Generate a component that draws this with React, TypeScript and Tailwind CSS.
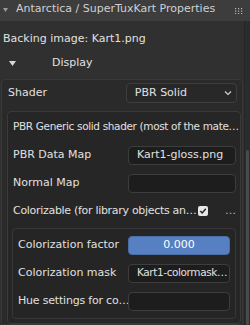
import React from "react";

const font = { fontFamily: '"DejaVu Sans", "Liberation Sans", sans-serif' };

function Row({ label, children }: { label: string; children?: React.ReactNode }) {
  return (
    <div className="flex items-center h-[28px] pl-[5px]">
      <div className="w-[115px] overflow-hidden whitespace-nowrap">{label}</div>
      {children}
    </div>
  );
}

function Field({ value, w = "w-[108px]", extra = "" }: { value?: string; w?: string; extra?: string }) {
  return (
    <div className={`${w} h-[19px] rounded-[4px] bg-[#1d1d1d] border border-[#3d3d3d] pl-[8px] flex items-center whitespace-nowrap overflow-hidden ${extra}`}>
      {value}
    </div>
  );
}

export default function App() {
  return (
    <div style={font} className="w-[250px] h-[325px] bg-[#303030] text-[#e0e0e0] text-[11px] overflow-hidden flex flex-col">
      <div className="h-[21px] bg-[#3d3d3d] flex items-center shrink-0">
        <svg width="16" height="21" viewBox="0 0 16 21" className="shrink-0">
          <path d="M3 8 L8 8 L5.5 12 Z" fill="#9a9a9a" />
        </svg>
        <span className="text-[11px] text-[#d0d0d0] whitespace-nowrap -mt-[2px]">Antarctica / SuperTuxKart Properties</span>
        <svg width="8" height="6" viewBox="0 0 8 6" className="ml-auto mr-[7px]">
          {[0, 3, 6].map((x) =>
            [0, 2.5, 5].map((y) => <rect key={`${x}-${y}`} x={x} y={y} width="1.2" height="1.2" fill="#b5b5b5" />)
          )}
        </svg>
      </div>
      <div className="flex flex-1 min-h-0">
        <div className="w-[244px] shrink-0 flex flex-col">
          <div className="h-[24px] mt-[7px] flex items-center pl-[3px] whitespace-nowrap">Backing image: Kart1.png</div>
          <div className="h-[24px] flex items-center">
            <svg width="52" height="24" viewBox="0 0 52 24" className="shrink-0">
              <path d="M9 10 L16 10 L12.5 15 Z" fill="#d8d8d8" />
            </svg>
            <span>Display</span>
          </div>
          <div className="mt-[4px] mx-[1px] rounded-t-[4px] border border-[#383838] bg-[#2a2a2a] flex-1 pt-[3px] px-[5px]">
            <div className="flex items-center h-[20px] pl-[1px]">
              <div className="w-[120px]">Shader</div>
              <div className="w-[113px] h-[20px] rounded-[4px] bg-[#282828] border border-[#3e3e3e] pl-[8px] pr-[4px] flex items-center justify-between">
                <span>PBR Solid</span>
                <svg width="8" height="6" viewBox="0 0 8 6">
                  <path d="M1 1.5 L4 4.5 L7 1.5" stroke="#d0d0d0" strokeWidth="1.2" fill="none" />
                </svg>
              </div>
            </div>
            <div className="mt-[8px] w-[234px] rounded-[4px] border border-[#3a3a3a] bg-[#262626] pt-[1px] pb-[4px]">
              <div className="h-[28px] flex items-center pl-[5px] pr-[2px] whitespace-nowrap text-[10.5px] tracking-[-0.35px]">PBR Generic solid shader (most of the mate…</div>
              <Row label="PBR Data Map">
                <Field value="Kart1-gloss.png" />
              </Row>
              <Row label="Normal Map">
                <Field />
              </Row>
              <div className="flex items-center h-[28px] pl-[5px]">
                <div className="w-[184px] whitespace-nowrap overflow-hidden tracking-[-0.3px]">Colorizable (for library objects an…</div>
                <div className="ml-[1px] w-[10px] h-[10px] rounded-[2px] bg-[#e6e6e6] flex items-center justify-center">
                  <svg width="8" height="8" viewBox="0 0 8 8">
                    <path d="M1.3 4 L3.2 6 L6.8 1.8" stroke="#262626" strokeWidth="1.5" fill="none" />
                  </svg>
                </div>
                <span className="ml-[17px] text-[#bdbdbd]">…</span>
              </div>
              <div className="mx-[4px] mt-[3px] rounded-[4px] border border-[#383838] bg-[#252525] pt-[2px] pb-[3px]">
                <div className="flex items-center h-[28px] pl-[5px]">
                  <div className="w-[110px] whitespace-nowrap overflow-hidden">Colorization factor</div>
                  <div className="w-[102px] h-[19px] rounded-[4px] bg-[#5680c2] border border-[#4a6ea8] flex items-center justify-center text-white">
                    0.000
                  </div>
                </div>
                <div className="flex items-center h-[28px] pl-[5px]">
                  <div className="w-[110px] whitespace-nowrap overflow-hidden">Colorization mask</div>
                  <Field value="Kart1-colormask…" w="w-[102px]" extra="text-[10.5px] tracking-[-0.4px]" />
                </div>
                <div className="flex items-center h-[28px] pl-[5px]">
                  <div className="w-[110px] whitespace-nowrap overflow-hidden tracking-[-0.2px]">Hue settings for co…</div>
                  <Field w="w-[102px]" />
                </div>
              </div>
            </div>
          </div>
        </div>
        <div className="flex-1 border-l border-[#262626] bg-[#2c2c2c] relative">
          <div className="absolute left-[1px] top-[129px] w-[3px] bottom-0 rounded-[2px] bg-[#4a4a4a]" />
        </div>
      </div>
    </div>
  );
}
